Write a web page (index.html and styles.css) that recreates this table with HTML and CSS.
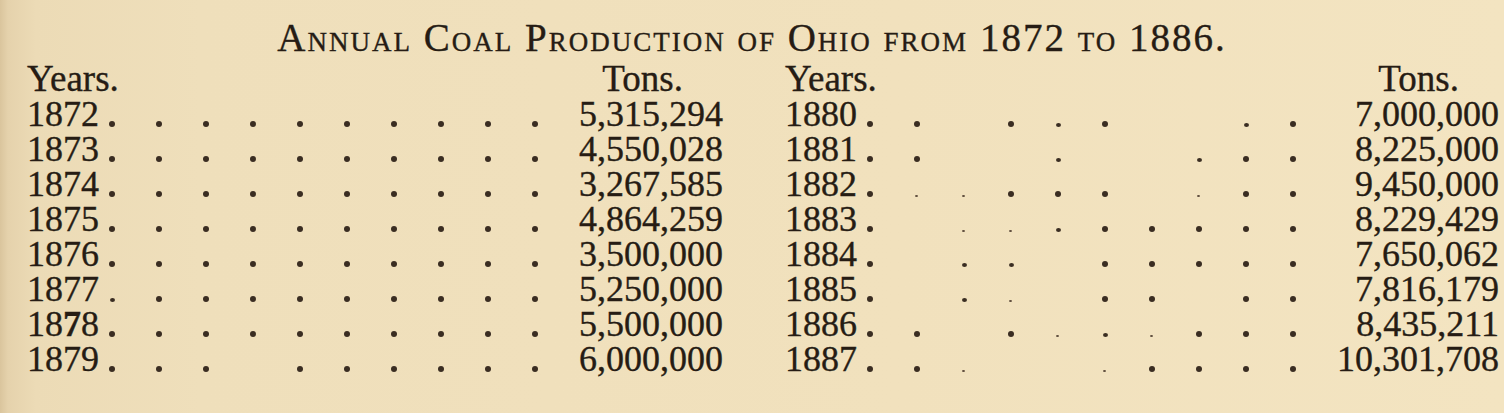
FILE: index.html
```html
<!DOCTYPE html>
<html lang="en">
<head>
<meta charset="utf-8">
<title>Annual Coal Production of Ohio</title>
<link rel="stylesheet" href="styles.css">
</head>
<body>
<div class="page">
  <h1 class="title">Annual Coal Production of Ohio from 1872 to 1886.</h1>
  <div class="cols">
    <div class="col">
      <div class="head"><span class="hy">Years.</span><span class="ht">Tons.</span></div>
      <div class="row"><span class="year">1872</span><span class="leaders"><span class="sl"><i></i></span><span class="sl"><i></i></span><span class="sl"><i></i></span><span class="sl"><i></i></span><span class="sl"><i></i></span><span class="sl"><i></i></span><span class="sl"><i></i></span><span class="sl"><i></i></span><span class="sl"><i></i></span><span class="sl"><i></i></span></span><span class="val">5,315,294</span></div>
      <div class="row"><span class="year">1873</span><span class="leaders"><span class="sl"><i></i></span><span class="sl"><i></i></span><span class="sl"><i></i></span><span class="sl"><i></i></span><span class="sl"><i></i></span><span class="sl"><i></i></span><span class="sl"><i></i></span><span class="sl"><i></i></span><span class="sl"><i></i></span><span class="sl"><i></i></span></span><span class="val">4,550,028</span></div>
      <div class="row"><span class="year">1874</span><span class="leaders"><span class="sl"><i></i></span><span class="sl"><i></i></span><span class="sl"><i></i></span><span class="sl"><i></i></span><span class="sl"><i></i></span><span class="sl"><i></i></span><span class="sl"><i></i></span><span class="sl"><i></i></span><span class="sl"><i></i></span><span class="sl"><i></i></span></span><span class="val">3,267,585</span></div>
      <div class="row"><span class="year">1875</span><span class="leaders"><span class="sl"><i></i></span><span class="sl"><i></i></span><span class="sl"><i></i></span><span class="sl"><i></i></span><span class="sl"><i></i></span><span class="sl"><i></i></span><span class="sl"><i></i></span><span class="sl"><i></i></span><span class="sl"><i></i></span><span class="sl"><i></i></span></span><span class="val">4,864,259</span></div>
      <div class="row"><span class="year">1876</span><span class="leaders"><span class="sl"><i></i></span><span class="sl"><i></i></span><span class="sl"><i></i></span><span class="sl"><i></i></span><span class="sl"><i></i></span><span class="sl"><i></i></span><span class="sl"><i></i></span><span class="sl"><i></i></span><span class="sl"><i></i></span><span class="sl"><i></i></span></span><span class="val">3,500,000</span></div>
      <div class="row"><span class="year">1877</span><span class="leaders"><span class="sl s"><i></i></span><span class="sl"><i></i></span><span class="sl"><i></i></span><span class="sl"><i></i></span><span class="sl"><i></i></span><span class="sl"><i></i></span><span class="sl"><i></i></span><span class="sl"><i></i></span><span class="sl"><i></i></span><span class="sl"><i></i></span></span><span class="val">5,250,000</span></div>
      <div class="row"><span class="year">18<b class="ink">7</b>8</span><span class="leaders"><span class="sl"><i></i></span><span class="sl"><i></i></span><span class="sl"><i></i></span><span class="sl"><i></i></span><span class="sl"><i></i></span><span class="sl"><i></i></span><span class="sl"><i></i></span><span class="sl"><i></i></span><span class="sl"><i></i></span><span class="sl"><i></i></span></span><span class="val">5,500,000</span></div>
      <div class="row"><span class="year">1879</span><span class="leaders"><span class="sl"><i></i></span><span class="sl"><i></i></span><span class="sl"><i></i></span><span class="sl e"><i></i></span><span class="sl"><i></i></span><span class="sl"><i></i></span><span class="sl"><i></i></span><span class="sl"><i></i></span><span class="sl"><i></i></span><span class="sl"><i></i></span></span><span class="val">6,000,000</span></div>
    </div>
    <div class="col">
      <div class="head"><span class="hy">Years.</span><span class="ht">Tons.</span></div>
      <div class="row"><span class="year">1880</span><span class="leaders"><span class="sl"><i></i></span><span class="sl"><i></i></span><span class="sl e"><i></i></span><span class="sl"><i></i></span><span class="sl s"><i></i></span><span class="sl"><i></i></span><span class="sl e"><i></i></span><span class="sl e"><i></i></span><span class="sl s"><i></i></span><span class="sl"><i></i></span></span><span class="val">7,000,000</span></div>
      <div class="row"><span class="year">1881</span><span class="leaders"><span class="sl"><i></i></span><span class="sl"><i></i></span><span class="sl e"><i></i></span><span class="sl e"><i></i></span><span class="sl s"><i></i></span><span class="sl e"><i></i></span><span class="sl e"><i></i></span><span class="sl s"><i></i></span><span class="sl"><i></i></span><span class="sl"><i></i></span></span><span class="val">8,225,000</span></div>
      <div class="row"><span class="year">1882</span><span class="leaders"><span class="sl"><i></i></span><span class="sl t"><i></i></span><span class="sl t"><i></i></span><span class="sl"><i></i></span><span class="sl"><i></i></span><span class="sl"><i></i></span><span class="sl e"><i></i></span><span class="sl t"><i></i></span><span class="sl"><i></i></span><span class="sl"><i></i></span></span><span class="val">9,450,000</span></div>
      <div class="row"><span class="year">1883</span><span class="leaders"><span class="sl"><i></i></span><span class="sl e"><i></i></span><span class="sl t"><i></i></span><span class="sl t"><i></i></span><span class="sl s"><i></i></span><span class="sl"><i></i></span><span class="sl"><i></i></span><span class="sl"><i></i></span><span class="sl"><i></i></span><span class="sl"><i></i></span></span><span class="val">8,229,429</span></div>
      <div class="row"><span class="year">1884</span><span class="leaders"><span class="sl"><i></i></span><span class="sl e"><i></i></span><span class="sl s"><i></i></span><span class="sl s"><i></i></span><span class="sl e"><i></i></span><span class="sl"><i></i></span><span class="sl"><i></i></span><span class="sl"><i></i></span><span class="sl"><i></i></span><span class="sl"><i></i></span></span><span class="val">7,650,062</span></div>
      <div class="row"><span class="year">1885</span><span class="leaders"><span class="sl"><i></i></span><span class="sl e"><i></i></span><span class="sl s"><i></i></span><span class="sl t"><i></i></span><span class="sl e"><i></i></span><span class="sl"><i></i></span><span class="sl"><i></i></span><span class="sl e"><i></i></span><span class="sl"><i></i></span><span class="sl"><i></i></span></span><span class="val">7,816,179</span></div>
      <div class="row"><span class="year">1886</span><span class="leaders"><span class="sl"><i></i></span><span class="sl"><i></i></span><span class="sl e"><i></i></span><span class="sl"><i></i></span><span class="sl t"><i></i></span><span class="sl s"><i></i></span><span class="sl t"><i></i></span><span class="sl"><i></i></span><span class="sl"><i></i></span><span class="sl"><i></i></span></span><span class="val">8,435,211</span></div>
      <div class="row"><span class="year">1887</span><span class="leaders"><span class="sl"><i></i></span><span class="sl"><i></i></span><span class="sl t"><i></i></span><span class="sl e"><i></i></span><span class="sl e"><i></i></span><span class="sl t"><i></i></span><span class="sl"><i></i></span><span class="sl"><i></i></span><span class="sl"><i></i></span><span class="sl"><i></i></span></span><span class="val">10,301,708</span></div>
    </div>
  </div>
</div>
</body>
</html>
```

FILE: styles.css
```css
html, body {
  margin: 0;
  padding: 0;
}

body {
  width: 1504px;
  height: 413px;
  overflow: hidden;
  background: linear-gradient(to right, #dac59d 0, #e5d2ac 8px, #ecdbb6 36px, #efdfbb 200px, #f1e1bd 60%, #f3e4c1 100%);
  color: #261c14;
  font-family: "Liberation Serif", "Times New Roman", serif;
  -webkit-text-stroke: 0.35px #261c14;
}

.page {
  padding: 17px 27px 0 27px;
}

.title {
  margin: 0 0 2px 0;
  font-size: 39px;
  line-height: 42px;
  font-weight: normal;
  font-variant: small-caps;
  letter-spacing: 2px;
  text-align: center;
}

.cols {
  display: grid;
  grid-template-columns: 1fr 1fr;
  column-gap: 62px;
}

.col {
  display: flex;
  flex-direction: column;
}

.head {
  display: flex;
  justify-content: space-between;
  font-size: 37px;
  line-height: 35px;
  height: 36px;
}

.ht {
  padding-right: 40px;
}

.row {
  display: flex;
  height: 35px;
  font-size: 36px;
  line-height: 35px;
  white-space: nowrap;
}

.year {
  flex: none;
  width: 82px;
}

.ink {
  font-weight: bold;
}

.leaders {
  flex: none;
  display: flex;
  align-items: flex-end;
  padding-bottom: 5px;
}

.sl {
  flex: none;
  width: 47px;
  display: flex;
  align-items: flex-end;
}

.sl i {
  display: block;
  width: 6px;
  height: 6px;
  border-radius: 50%;
  background: #3a2d22;
}

.sl.s i {
  width: 5px;
  height: 4px;
  margin-left: 1px;
}

.sl.t i {
  width: 3px;
  height: 2px;
  margin-left: 1px;
  background: #5a4a3a;
}

.sl.e i {
  visibility: hidden;
}

.val {
  flex: 1;
  text-align: right;
}
```
